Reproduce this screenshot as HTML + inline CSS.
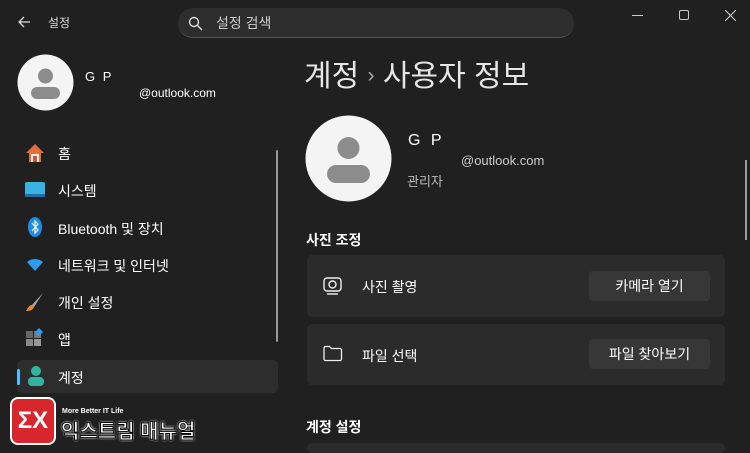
<!DOCTYPE html>
<html><head><meta charset="utf-8"><style>
*{margin:0;padding:0;box-sizing:border-box}
html{width:750px;height:453px;overflow:hidden}
body{width:750px;height:453px;background:#202020;font-family:"Liberation Sans","Noto Sans CJK KR",sans-serif;color:#fff;position:relative;overflow:hidden}
.a{position:absolute}
.t{font-size:14px;color:#fff}
.card{position:absolute;left:307px;width:418px;background:#2b2b2b;border-radius:5px}
.btn{position:absolute;left:282px;width:121px;height:30px;background:#373737;border-radius:4px;font-size:14px;text-align:center;line-height:30px}
.nav{position:absolute;left:58px;font-size:14px}
</style></head><body>
<svg class="a" style="left:16px;top:14px" width="16" height="16"><path d="M14 8H3M8 3L3 8l5 5" stroke="#ddd" stroke-width="1.3" fill="none"/></svg>
<div class="a" style="left:48px;top:14px;font-size:12px;color:#ddd">설정</div>
<div class="a" style="left:178px;top:8px;width:396px;height:30px;background:#2d2d2d;border-radius:15px;border-bottom:1px solid #555"></div>
<svg class="a" style="left:188px;top:16px" width="15" height="15"><circle cx="6" cy="6" r="4.5" stroke="#ddd" stroke-width="1.4" fill="none"/><path d="M9.5 9.5L14 14" stroke="#ddd" stroke-width="1.5"/></svg>
<div class="a" style="left:216px;top:13px;font-size:14px;color:#ccc">설정 검색</div>
<div class="a" style="left:632px;top:15px;width:11px;border-top:1px solid #ccc"></div>
<div class="a" style="left:679px;top:10px;width:10px;height:10px;border:1px solid #ccc;border-radius:2px"></div>
<svg class="a" style="left:725px;top:10px" width="11" height="11"><path d="M0 0L11 11M11 0L0 11" stroke="#ccc" stroke-width="1.1"/></svg>

<svg class="a" style="left:17px;top:54px" width="57" height="57"><circle cx="28.5" cy="28.5" r="28" fill="#f4f4f4"/><circle cx="28.5" cy="22" r="7.5" fill="#8c8c8c"/><rect x="14" y="33" width="29" height="12" rx="6" fill="#8c8c8c"/></svg>
<div class="a" style="left:85px;top:69px;font-size:13px;letter-spacing:2px">G P</div>
<div class="a" style="left:139px;top:86px;font-size:12px">@outlook.com</div>

<svg class="a" style="left:25px;top:143px" width="20" height="20"><path d="M10 1L1 10h3v9h12v-9h3z" fill="#e46d3a"/><path d="M6 11h8v8H6z" fill="#eee"/><path d="M8 13h4v6H8z" fill="#c45a2f"/></svg>
<div class="nav" style="top:144px">홈</div>
<svg class="a" style="left:25px;top:182px" width="20" height="16"><rect x="0" y="0" width="20" height="14" rx="2" fill="#3ab2e4"/><rect x="0" y="12" width="20" height="3" fill="#1c6fa0"/></svg>
<div class="nav" style="top:181px">시스템</div>
<svg class="a" style="left:28px;top:217px" width="14" height="20"><ellipse cx="7" cy="10" rx="7" ry="10" fill="#1e8ce8"/><path d="M4 6l6 7-3 3V4l3 3-6 7" stroke="#fff" stroke-width="1.2" fill="none"/></svg>
<div class="nav" style="top:219px">Bluetooth 및 장치</div>
<svg class="a" style="left:26px;top:257px" width="18" height="14"><path d="M1 5a12 12 0 0 1 16 0L9 14z" fill="#2d9bf0"/></svg>
<div class="nav" style="top:256px">네트워크 및 인터넷</div>
<svg class="a" style="left:25px;top:292px" width="20" height="20"><path d="M18 1L7 13l2 2z" fill="#aaa"/><path d="M7 13c-3 0-4 3-6 6 4 0 7-1 8-4z" fill="#e88a2a"/></svg>
<div class="nav" style="top:293px">개인 설정</div>
<svg class="a" style="left:26px;top:328px" width="19" height="19"><rect x="0" y="3" width="7" height="7" fill="#666"/><rect x="0" y="11" width="7" height="7" fill="#888"/><rect x="8" y="11" width="7" height="7" fill="#999"/><rect x="8" y="3" width="7" height="7" fill="#777"/><path d="M13 0l4 4-4 4-4-4z" fill="#2d9bf0"/></svg>
<div class="nav" style="top:330px">앱</div>
<div class="a" style="left:17px;top:360px;width:261px;height:33px;background:#2d2d2d;border-radius:5px"></div>
<div class="a" style="left:17px;top:369px;width:3px;height:16px;background:#4cc2ff;border-radius:2px"></div>
<svg class="a" style="left:27px;top:366px" width="18" height="20"><circle cx="9" cy="5" r="5" fill="#2fb5a0"/><rect x="1" y="11" width="16" height="9" rx="4" fill="#2fb5a0"/></svg>
<div class="nav" style="top:368px">계정</div>
<div class="a" style="left:276px;top:150px;width:2px;height:192px;background:#9a9a9a;border-radius:1px"></div>

<div class="a" style="left:10px;top:397px;width:46px;height:48px;background:#d8262c;border:2px solid #fff;border-radius:8px;color:#fff;font-weight:bold;font-size:24px;text-align:center;line-height:44px">ΣX</div>
<div class="a" style="left:62px;top:408px;font-size:7px;font-weight:bold">More Better IT Life</div>
<div class="a" style="left:61px;top:415px;font-size:20px;font-weight:bold;-webkit-text-stroke:1px #000;text-shadow:0 0 2px #fff,0 0 2px #fff">익스트림 매뉴얼</div>

<div class="a" style="left:304px;top:51px;font-size:30px;color:#e6e6e6">계정 <span style="font-size:21px;position:relative;top:-4px;color:#aaa">›</span> 사용자 정보</div>
<svg class="a" style="left:305px;top:115px" width="87" height="87"><circle cx="43.5" cy="43.5" r="43" fill="#f4f4f4"/><circle cx="43.5" cy="33" r="11" fill="#8c8c8c"/><rect x="22" y="50" width="43" height="18" rx="9" fill="#8c8c8c"/></svg>
<div class="a" style="left:408px;top:132px;font-size:16px;letter-spacing:3px">G P</div>
<div class="a" style="left:461px;top:153px;font-size:13px;color:#ccc">@outlook.com</div>
<div class="a" style="left:407px;top:171px;font-size:13px;color:#bbb">관리자</div>

<div class="a" style="left:306px;top:230px;font-size:14px;font-weight:bold">사진 조정</div>
<div class="card" style="top:255px;height:62px">
<svg class="a" style="left:16px;top:21px" width="20" height="20"><rect x="1" y="2" width="17" height="13" rx="3" stroke="#eee" stroke-width="1.4" fill="none"/><circle cx="9.5" cy="8.5" r="3.5" stroke="#eee" stroke-width="1.4" fill="none"/><path d="M4 18h11" stroke="#eee" stroke-width="1.4"/></svg>
<div class="a t" style="left:55px;top:22px">사진 촬영</div>
<div class="btn" style="top:16px">카메라 열기</div></div>
<div class="card" style="top:324px;height:61px">
<svg class="a" style="left:16px;top:21px" width="20" height="18"><path d="M1 3a1.5 1.5 0 0 1 1.5-1.5h4l2 2h8.5A1.5 1.5 0 0 1 18.5 5v9a1.5 1.5 0 0 1-1.5 1.5h-14.5A1.5 1.5 0 0 1 1 14z" stroke="#eee" stroke-width="1.3" fill="none"/></svg>
<div class="a t" style="left:55px;top:22px">파일 선택</div>
<div class="btn" style="top:15px">파일 찾아보기</div></div>
<div class="a" style="left:306px;top:417px;font-size:14px;font-weight:bold">계정 설정</div>
<div class="card" style="top:443px;height:10px"></div>
<div class="a" style="left:745px;top:160px;width:2px;height:80px;background:#9a9a9a"></div>
</body></html>
